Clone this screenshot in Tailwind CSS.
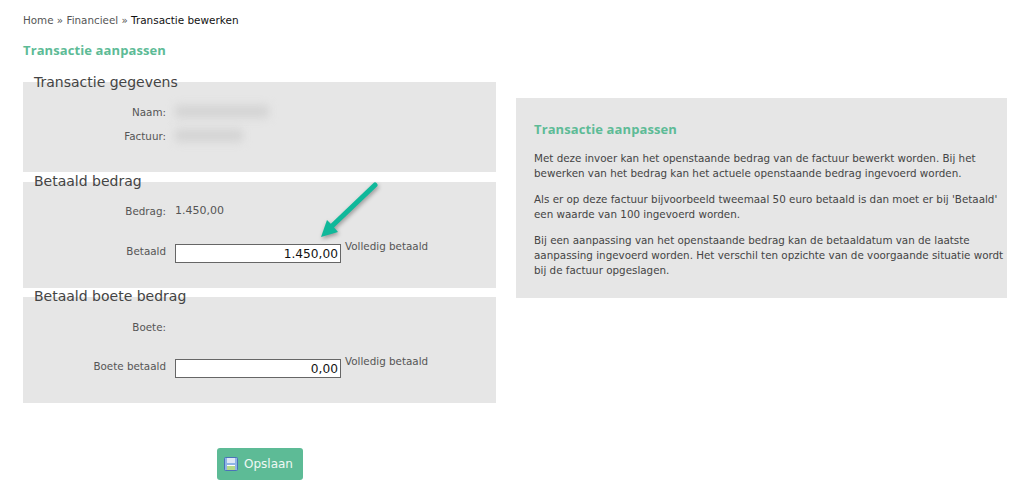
<!DOCTYPE html>
<html lang="nl"><head><meta charset="utf-8"><script src="https://cdn.jsdelivr.net/npm/@tailwindcss/browser@4"></script></head>
<body class="bg-white font-['DejaVu_Sans',sans-serif] text-[#555] text-[10.35px] w-[1022px] h-[497px] overflow-hidden relative">
<div class="pl-[23px] pt-[13px]">
  <div class="h-[14px] leading-[14px] text-[#555]">Home » Financieel » <span class="text-[#111] text-[10.45px]">Transactie bewerken</span></div>
  <h1 class="mt-[15px] h-[16px] leading-[16px] font-['Open_Sans',sans-serif] font-bold text-[13px] text-[#5dbb96] tracking-[0.1px]">Transactie aanpassen</h1>
  <div class="flex mt-[24px] items-start">
    <div class="w-[473px]">
      <section class="bg-[#e6e6e6] h-[90px] pl-[11px]">
        <h2 class="text-[14px] leading-[18px] -translate-y-[9px] text-[#444]">Transactie gegevens</h2>
        <div class="grid grid-cols-[132px_1fr] gap-x-[9px] -ml-[11px] pl-[11px] mt-[5px] leading-[14px]">
          <div class="text-right">Naam:</div><div class="h-[13px] w-[94px] rounded bg-[#d4d4d4] blur-[4px]"></div>
          <div class="text-right mt-[10px]">Factuur:</div><div class="mt-[10px] h-[13px] w-[68px] rounded bg-[#d4d4d4] blur-[4px]"></div>
        </div>
      </section>
      <section class="bg-[#e6e6e6] h-[106px] mt-[10px] pl-[11px]">
        <h2 class="text-[14px] leading-[18px] -translate-y-[10px] text-[#444]">Betaald bedrag</h2>
        <div class="grid grid-cols-[132px_1fr] gap-x-[9px] mt-[4px] leading-[14px]">
          <div class="text-right">Bedrag:</div><div class="text-[11px]">1.450,00</div>
        </div>
        <div class="flex items-start mt-[26px]">
          <div class="w-[132px] text-right leading-[14px]">Betaald</div>
          <div class="ml-[9px] w-[166px] h-[19px] border border-[#666] bg-white text-right text-[12.2px] leading-[19px] pr-[2px] text-[#111]">1.450,00</div>
          <div class="ml-[4px] leading-[14px] -mt-[5px]">Volledig betaald</div>
        </div>
      </section>
      <section class="bg-[#e6e6e6] h-[106px] mt-[9px] pl-[11px]">
        <h2 class="text-[14px] leading-[18px] -translate-y-[10px] text-[#444]">Betaald boete bedrag</h2>
        <div class="grid grid-cols-[132px_1fr] gap-x-[9px] mt-[5px] leading-[14px]">
          <div class="text-right">Boete:</div><div></div>
        </div>
        <div class="flex items-start mt-[25px]">
          <div class="w-[132px] text-right leading-[14px]">Boete betaald</div>
          <div class="ml-[9px] w-[166px] h-[19px] border border-[#666] bg-white text-right text-[12.2px] leading-[19px] pr-[2px] text-[#111]">0,00</div>
          <div class="ml-[4px] leading-[14px] -mt-[5px]">Volledig betaald</div>
        </div>
      </section>
      <div class="mt-[45px] ml-[194px] w-[86px] h-[32px] rounded-[3px] bg-[#5dbb96] flex items-center pl-[7px] gap-[6px] text-white/90 text-[12px]">
        <svg width="14" height="14" viewBox="0 0 14 14"><rect x=".5" y=".5" width="13" height="13" rx="1" fill="#8fb4e6" stroke="#4a72b8"/><rect x="3" y="1" width="8" height="5" fill="#dfe8f5"/><rect x="3" y="9" width="8" height="4" fill="#b5d98a"/><rect x="3" y="8" width="8" height="1" fill="#fff"/></svg>
        <span>Opslaan</span>
      </div>
    </div>
    <aside class="ml-[20px] mt-[16px] w-[491px] h-[200px] bg-[#e6e6e6] pl-[18px] pt-[23px] text-[#444] leading-[15px]">
      <h2 class="h-[17px] leading-[17px] font-['Open_Sans',sans-serif] font-bold text-[13px] text-[#5dbb96] tracking-[0.1px]">Transactie aanpassen</h2>
      <p class="mt-[13px] whitespace-nowrap">Met deze invoer kan het openstaande bedrag van de factuur bewerkt worden. Bij het<br>bewerken van het bedrag kan het actuele openstaande bedrag ingevoerd worden.</p>
      <p class="mt-[11px] whitespace-nowrap">Als er op deze factuur bijvoorbeeld tweemaal 50 euro betaald is dan moet er bij 'Betaald'<br>een waarde van 100 ingevoerd worden.</p>
      <p class="mt-[11px] whitespace-nowrap">Bij een aanpassing van het openstaande bedrag kan de betaaldatum van de laatste<br>aanpassing ingevoerd worden. Het verschil ten opzichte van de voorgaande situatie wordt<br>bij de factuur opgeslagen.</p>
    </aside>
  </div>
</div>
<svg class="absolute left-[315px] top-[175px] drop-shadow-[1px_2px_2px_rgba(0,0,0,0.35)]" width="70" height="70" viewBox="0 0 70 70">
  <path d="M60 10 L16 52" stroke="#10b89a" stroke-width="5" stroke-linecap="round" fill="none"/>
  <path d="M6 62 L12 45 L17 50 L23 57 Z" fill="#10b89a"/>
</svg>
</body></html>
